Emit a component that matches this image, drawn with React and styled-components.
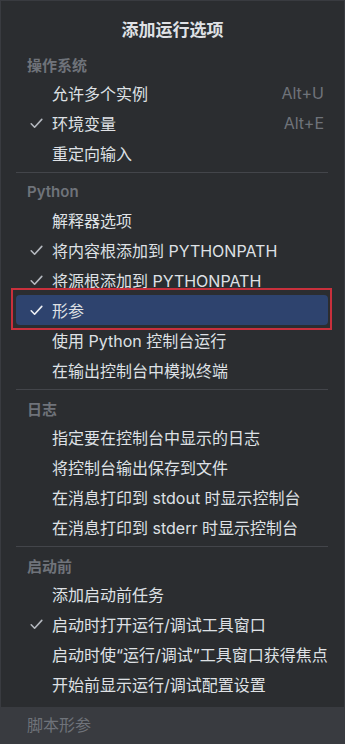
import React from "react";
import styled, { createGlobalStyle } from "styled-components";

const GlobalStyle = createGlobalStyle`
  html, body {
    margin: 0;
    padding: 0;
    background: #2b2d30;
  }
  * {
    box-sizing: border-box;
  }
`;

const Panel = styled.div`
  width: 345px;
  height: 744px;
  display: flex;
  flex-direction: column;
  background: #2b2d30;
  border: 1px solid #393b40;
  font-family: Inter, "Noto Sans CJK SC", sans-serif;
  color: #dfe1e5;
  overflow: hidden;
`;

const Title = styled.div`
  height: 50px;
  display: flex;
  align-items: center;
  justify-content: center;
  padding-top: 4px;
  font-size: 17px;
  font-weight: 700;
  color: #dfe1e5;
`;

const Header = styled.div`
  height: 27px;
  display: flex;
  align-items: center;
  padding-left: 26px;
  font-size: 15px;
  font-weight: 600;
  color: #6f737a;
`;

const Separator = styled.div`
  height: 1px;
  margin: 4px 16px 5px 15px;
  background: #43454a;
`;

const Row = styled.div`
  position: relative;
  height: 30px;
  margin: 0 16px 0 15px;
  padding: 0 4px 0 14px;
  display: flex;
  align-items: center;
  font-size: 16px;
  white-space: nowrap;
  border-radius: 4px;
  background: ${(p) => (p.$selected ? "#2e436e" : "transparent")};
  color: #dfe1e5;

  ${(p) =>
    p.$marked &&
    `
    &::after {
      content: "";
      position: absolute;
      top: -7px;
      bottom: -5px;
      left: -5px;
      right: -4px;
      border: 2px solid #c9303c;
    }
  `}
`;

const CheckSlot = styled.span`
  width: 22px;
  flex: none;
  display: flex;
  align-items: center;
`;

const Label = styled.span`
  flex: 1;
`;

const Shortcut = styled.span`
  color: #6f737a;
  font-size: 16px;
`;

const Footer = styled.div`
  margin-top: auto;
  height: 36px;
  display: flex;
  align-items: center;
  padding: 0 0 2px 26px;
  background: #393b40;
  color: #6f737a;
  font-size: 16px;
`;

const Check = ({ bright }) => (
  <svg width="13" height="11" viewBox="0 0 13 11" fill="none">
    <path
      d="M1.2 5.8 L4.6 9.2 L11.8 1.4"
      stroke={bright ? "#eef0f4" : "#b4b8bf"}
      strokeWidth="1.6"
      strokeLinecap="round"
      strokeLinejoin="round"
    />
  </svg>
);

const sections = [
  {
    title: "操作系统",
    items: [
      { label: "允许多个实例", shortcut: "Alt+U" },
      { label: "环境变量", shortcut: "Alt+E", checked: true },
      { label: "重定向输入" },
    ],
  },
  {
    title: "Python",
    items: [
      { label: "解释器选项" },
      { label: "将内容根添加到 PYTHONPATH", checked: true },
      { label: "将源根添加到 PYTHONPATH", checked: true },
      { label: "形参", checked: true, selected: true },
      { label: "使用 Python 控制台运行" },
      { label: "在输出控制台中模拟终端" },
    ],
  },
  {
    title: "日志",
    items: [
      { label: "指定要在控制台中显示的日志" },
      { label: "将控制台输出保存到文件" },
      { label: "在消息打印到 stdout 时显示控制台" },
      { label: "在消息打印到 stderr 时显示控制台" },
    ],
  },
  {
    title: "启动前",
    items: [
      { label: "添加启动前任务" },
      { label: "启动时打开运行/调试工具窗口", checked: true },
      { label: "启动时使“运行/调试”工具窗口获得焦点" },
      { label: "开始前显示运行/调试配置设置" },
    ],
  },
];

export default function App() {
  return (
    <>
      <GlobalStyle />
      <Panel>
        <Title>添加运行选项</Title>
        {sections.map((section, i) => (
          <React.Fragment key={section.title}>
            {i > 0 && <Separator />}
            <Header>{section.title}</Header>
            {section.items.map((item) => (
              <Row
                key={item.label}
                $selected={item.selected}
                $marked={item.selected}
              >
                <CheckSlot>
                  {item.checked && <Check bright={item.selected} />}
                </CheckSlot>
                <Label>{item.label}</Label>
                {item.shortcut && <Shortcut>{item.shortcut}</Shortcut>}
              </Row>
            ))}
          </React.Fragment>
        ))}
        <Footer>脚本形参</Footer>
      </Panel>
    </>
  );
}
